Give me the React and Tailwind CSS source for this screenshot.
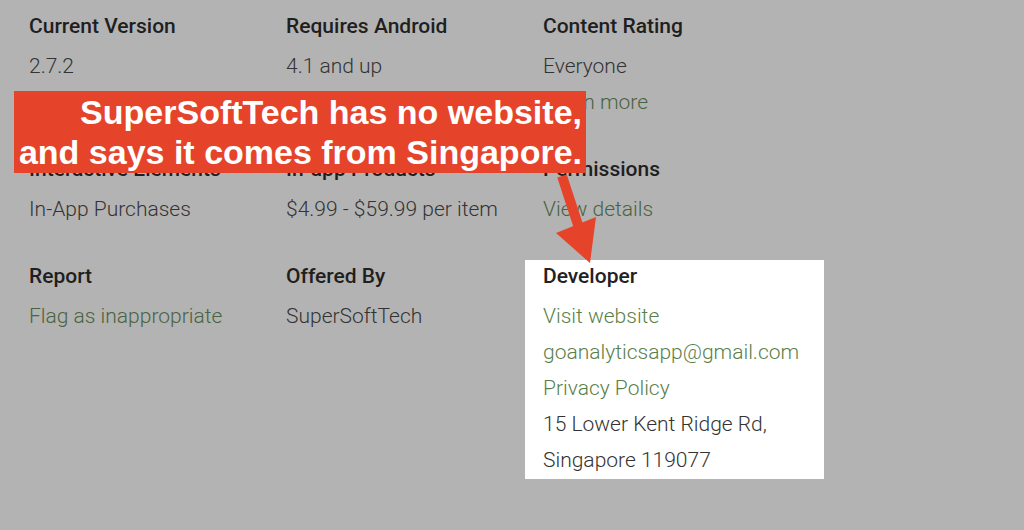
import React from "react";

// one info cell: title + list of lines
const Cell = ({ title, lines }) => (
  <div>
    <h3 className="text-[21px] leading-[24px] font-medium text-[#1f1f1f]">{title}</h3>
    <div className="mt-[10px]">
      {lines.map((l, i) => (
        <div
          key={i}
          className={`text-[21px] leading-[36px] font-light ${l.link ? "text-[#4a6340]" : "text-[#333]"}`}
        >
          {l.text}
        </div>
      ))}
    </div>
  </div>
);

export default function App() {
  return (
    <div
      className="relative w-[1024px] h-[530px] overflow-hidden bg-[#b3b3b3]"
      style={{ fontFamily: "Roboto, 'Noto Sans', sans-serif" }}
    >
      <div className="grid grid-cols-[257px_257px_257px] gap-y-[37px] pl-[29px] pt-[14px]">
        <Cell title="Current Version" lines={[{ text: "2.7.2" }]} />
        <Cell title="Requires Android" lines={[{ text: "4.1 and up" }]} />
        <Cell
          title="Content Rating"
          lines={[{ text: "Everyone" }, { text: "Learn more", link: true }]}
        />

        <Cell title="Interactive Elements" lines={[{ text: "In-App Purchases" }]} />
        <Cell title="In-app Products" lines={[{ text: "$4.99 - $59.99 per item" }]} />
        <Cell title="Permissions" lines={[{ text: "View details", link: true }]} />

        <Cell title="Report" lines={[{ text: "Flag as inappropriate", link: true }]} />
        <Cell title="Offered By" lines={[{ text: "SuperSoftTech" }]} />

        {/* highlighted developer block */}
        <div className="-ml-[18px] -mt-[4px] w-[299px] bg-white pl-[18px] pt-[4px] pb-[1px]">
          <h3 className="text-[21px] leading-[24px] font-medium text-[#222]">Developer</h3>
          <div className="mt-[10px] text-[21px] leading-[36px] font-light">
            <div className="text-[#5a7f4a]">Visit website</div>
            <div className="text-[#5a7f4a]">goanalyticsapp@gmail.com</div>
            <div className="text-[#5a7f4a]">Privacy Policy</div>
            <div className="text-[#333]">15 Lower Kent Ridge Rd,</div>
            <div className="text-[#333]">Singapore 119077</div>
          </div>
        </div>
      </div>

      {/* annotation banner */}
      <div
        className="absolute left-[14px] top-[91px] w-[572px] h-[82px] bg-[#e6432b] pt-[1px] pr-[4px] text-right text-white font-bold text-[34px] leading-[40px] whitespace-nowrap"
        style={{ fontFamily: "'Liberation Sans', Arial, sans-serif" }}
      >
        <div>SuperSoftTech has no website,</div>
        <div>and says it comes from Singapore.</div>
      </div>

      {/* arrow */}
      <svg className="absolute left-0 top-0" width="1024" height="530">
        <line x1="562" y1="176" x2="579" y2="228" stroke="#e6432b" strokeWidth="10" />
        <polygon points="556,233 596,217 590,263" fill="#e6432b" />
      </svg>
    </div>
  );
}
